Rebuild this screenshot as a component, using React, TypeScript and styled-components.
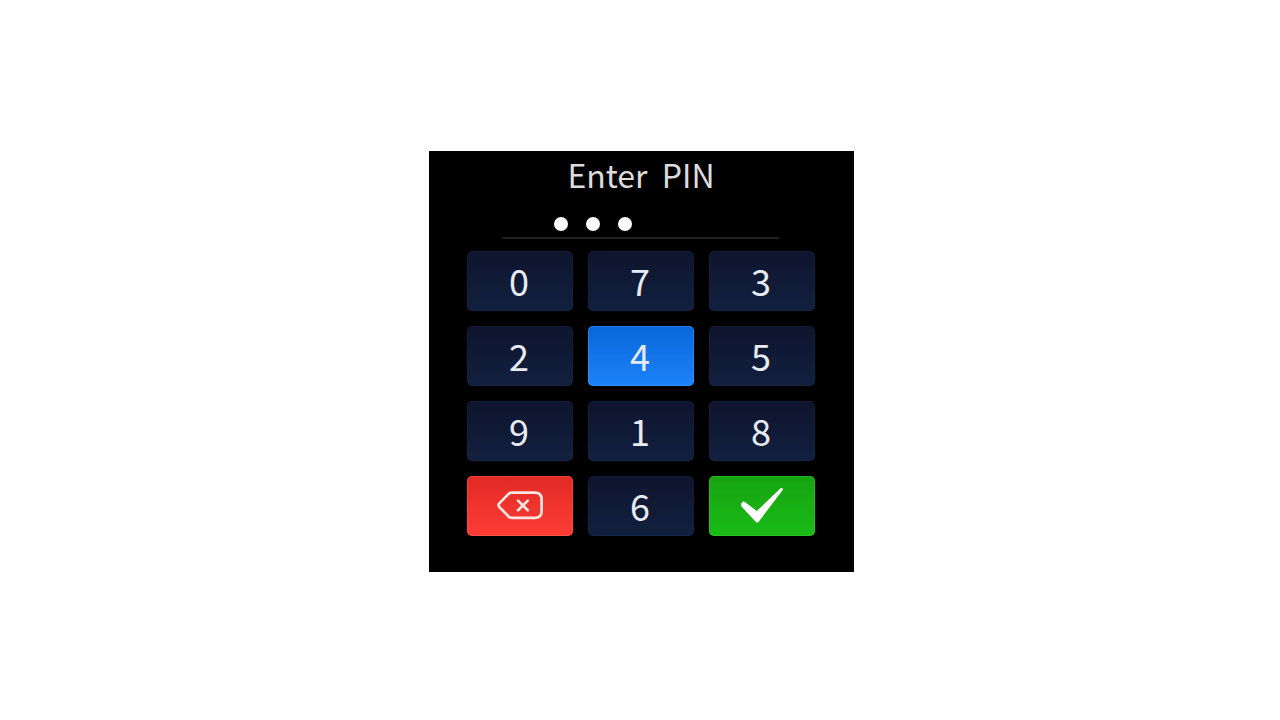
import { useState } from 'react';
import styled, { createGlobalStyle, css } from 'styled-components';

const GlobalStyle = createGlobalStyle`
  *, *::before, *::after { box-sizing: border-box; }
  body { margin: 0; background: #fff; }
`;

const Page = styled.main`
  display: flex;
  align-items: center;
  justify-content: center;
  min-height: 100vh;
  padding: 3px 0 0 3px;
  font-family: 'Noto Sans CJK SC', 'Noto Sans', sans-serif;
`;

const Panel = styled.section`
  display: flex;
  flex-direction: column;
  width: 100%;
  max-width: 425px;
  padding: 0 39px 36px 38px;
  background: #000;
`;

const Title = styled.h1`
  margin: 0;
  color: #dcdcdc;
  font-size: 32px;
  font-weight: 400;
  line-height: 46px;
  text-align: center;
  white-space: pre;
`;

const Entry = styled.output`
  display: flex;
  align-items: flex-end;
  justify-content: center;
  gap: 18px;
  height: 42px;
  margin: 0 36px 12px 35px;
  padding-bottom: 6px;
  border-bottom: 2px solid #1f1f1f;
`;

const Slot = styled.span<{ $filled: boolean }>`
  width: 14px;
  height: 14px;
  border-radius: 50%;
  background: ${({ $filled }) => ($filled ? '#fafafa' : 'transparent')};
`;

const Keypad = styled.div`
  display: grid;
  grid-template-columns: repeat(3, 1fr);
  gap: 15px;
`;

type Tone = 'digit' | 'active' | 'danger' | 'confirm';

const tones = {
  digit: css`
    background: linear-gradient(#0e142d, #12203f);
    box-shadow: inset 0 0 0 1px rgba(40, 56, 100, 0.2);
  `,
  active: css`
    background: linear-gradient(#0867d8, #1c83fb);
    box-shadow: inset 0 0 0 1px rgba(90, 165, 255, 0.4);
  `,
  danger: css`
    background: linear-gradient(#e22a24, #fc3d36);
    box-shadow: inset 0 0 0 1px rgba(255, 110, 90, 0.4);
  `,
  confirm: css`
    background: linear-gradient(#16a411, #1abb17);
    box-shadow: inset 0 0 0 1px rgba(80, 220, 70, 0.3);
  `,
};

const Key = styled.button<{ $tone: Tone }>`
  display: flex;
  align-items: center;
  justify-content: center;
  height: 60px;
  padding: 0 2px 2px 0;
  border: 0;
  border-radius: 5px;
  color: #e6eaf1;
  font-family: inherit;
  font-size: 36px;
  line-height: 52px;
  cursor: pointer;
  ${({ $tone }) => tones[$tone]}
`;

const Icon = styled.svg`
  display: block;
  width: 48px;
  height: 36px;
`;

const PIN_LENGTH = 6;
const DIGITS = ['0', '7', '3', '2', '4', '5', '9', '1', '8'];

export default function App() {
  const [pin, setPin] = useState('074');
  const [last, setLast] = useState('4');

  const press = (digit: string) => {
    setLast(digit);
    setPin((value) => (value + digit).slice(0, PIN_LENGTH));
  };

  const digitKey = (digit: string) => (
    <Key
      key={digit}
      type="button"
      $tone={digit === last ? 'active' : 'digit'}
      onClick={() => press(digit)}
    >
      {digit}
    </Key>
  );

  return (
    <>
      <GlobalStyle />
      <Page>
        <Panel aria-labelledby="pin-title">
          <Title id="pin-title">{'Enter  PIN'}</Title>
          <Entry aria-labelledby="pin-title">
            {Array.from({ length: PIN_LENGTH }, (_, i) => (
              <Slot key={i} $filled={i < pin.length} />
            ))}
          </Entry>
          <Keypad>
            {DIGITS.map(digitKey)}
            <Key
              type="button"
              $tone="danger"
              aria-label="Delete"
              onClick={() => setPin((value) => value.slice(0, -1))}
            >
              <Icon viewBox="0 0 48 36" fill="none" stroke="#ffe4e0" strokeLinejoin="round" strokeLinecap="round">
                <path
                  strokeWidth="2.7"
                  d="M17 5.6H39.6Q46.6 5.6 46.6 12.2V24.2Q46.6 30.8 39.6 30.8H17Q15 30.8 13.5 29.4L4.3 20Q2.8 18.2 4.3 16.4L13.5 7Q15 5.6 17 5.6Z"
                />
                <path strokeWidth="2.7" d="M23 13.6L32.8 23.2M32.8 13.6L23 23.2" />
              </Icon>
            </Key>
            {digitKey('6')}
            <Key type="button" $tone="confirm" aria-label="Confirm">
              <Icon viewBox="0 0 48 36" fill="#fff">
                <path d="M4.3 16.6L6 14.6Q7 14.2 7.9 15.1L19.8 24L43.8 1.1Q46.1 0.5 45.9 2.8L21.5 34.9Q20.2 36.2 19 34.9L4.5 19.6Q3.5 18 4.3 16.6Z" />
              </Icon>
            </Key>
          </Keypad>
        </Panel>
      </Page>
    </>
  );
}
